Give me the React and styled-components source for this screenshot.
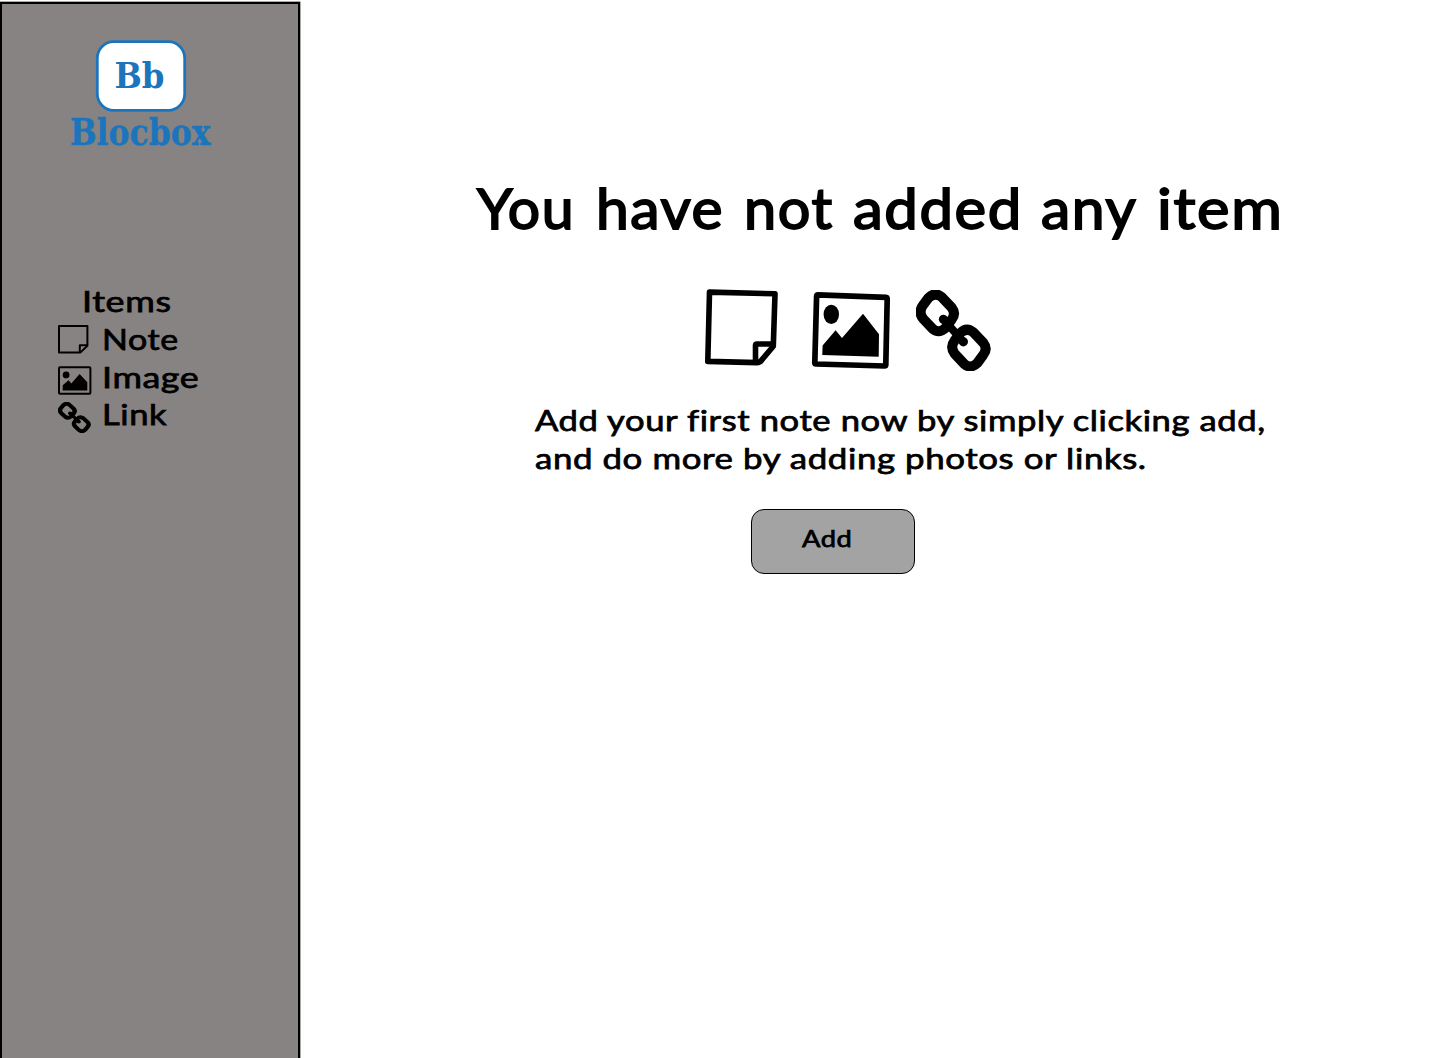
import React from "react";
import styled, { createGlobalStyle } from "styled-components";

const GlobalStyle = createGlobalStyle`
  * { box-sizing: border-box; }
  body { margin: 0; background: #fff; color: #000; font-family: Lato, "Open Sans", sans-serif; }
`;

const Page = styled.div`
  display: flex;
  height: 1058px;
  overflow: hidden;
`;

const Sidebar = styled.aside`
  width: 300px;
  height: 1070px;
  flex: none;
  margin-top: 2px;
  background: #888383;
  border: 2px solid #000;
  box-shadow: 0 0 0 0.5px #555;
`;

const LogoBox = styled.div`
  margin: 34px 0 0 66px;
  width: 146px;
  height: 116px;

  svg { display: block; overflow: visible; }
`;

const Nav = styled.nav`
  margin: 128px 0 0 56px;
`;

const NavTitle = styled.h2`
  margin: 0 0 0 24px;
  height: 38px;
  font-size: 29px;
  line-height: 38px;
  font-weight: 400;
`;

const NavItem = styled.div`
  display: flex;
  height: ${(p) => p.$height}px;
  line-height: 38px;
  font-size: 29px;
`;

const NavIcon = styled.span`
  flex: none;
  width: 43.5px;
  padding-top: ${(p) => p.$top}px;
  line-height: 0;
`;

const Label = styled.span`
  display: inline-block;
  white-space: nowrap;
  transform: scaleX(${(p) => p.$stretch || 1});
  transform-origin: 0 50%;
  letter-spacing: ${(p) => p.$spacing || 0}px;
  -webkit-text-stroke: ${(p) => p.$weight || 0.75}px currentColor;
`;

const Main = styled.main`
  flex: 1;
  display: flex;
  flex-direction: column;
`;

const Title = styled.h1`
  display: grid;
  grid-template-columns: 119px 148px 108.5px 188.5px 115.5px 130px;
  margin: 170px 0 0 177px;
  font-size: 56.5px;
  line-height: 74px;
  font-weight: 400;
`;

const IconRow = styled.div`
  display: flex;
  align-items: flex-start;
  margin: 44px 0 0 404px;
  height: 84px;
`;

const IconSlot = styled.span`
  line-height: 0;
  margin: ${(p) => p.$top}px ${(p) => p.$right}px 0 0;
`;

const Copy = styled.p`
  margin: 29px 0 0 235px;
  font-size: 29px;
  line-height: 38px;
`;

const AddButton = styled.button`
  margin: 32px 0 0 451px;
  width: 164px;
  height: 65px;
  padding: 0 0 8px 50px;
  text-align: left;
  font: 23.5px Lato, sans-serif;
  color: #000;
  background: #a3a3a3;
  border: 1.3px solid #000;
  border-radius: 13px;
`;

function Logo() {
  return (
    <svg width="146" height="116" viewBox="68 38 146 116" fontFamily="'DejaVu Serif Condensed','DejaVu Serif',serif" fontWeight="700" fill="#1c75bc">
      <rect x="97.3" y="41.7" width="87.4" height="68.6" rx="16.5" fill="#fff" stroke="#1c75bc" strokeWidth="2.8" />
      <text x="114.5" y="88" fontSize="36" textLength="50" lengthAdjust="spacingAndGlyphs">Bb</text>
      <text x="70" y="145.3" fontSize="37.5" textLength="140.5" lengthAdjust="spacingAndGlyphs" stroke="#1c75bc" strokeWidth="0.4">Blocbox</text>
    </svg>
  );
}

const ring = "M85 68Q105 48 126 66L155 97Q169 115 155 133L137 158Q117 178 97 160L69 130Q54 110 69 90Z";

function LinkIcon({ width, height }) {
  return (
    <svg width={width} height={height} viewBox="48 44 225 244" preserveAspectRatio="none" fill="none" stroke="#000">
      <path d={ring} strokeWidth="30" />
      <path d={ring} strokeWidth="30" transform="translate(95 106)" />
      <path d="M130 132L190 200" strokeWidth="24" />
      <circle cx="130" cy="132" r="13.5" fill="#000" stroke="none" />
      <circle cx="190" cy="200" r="14" fill="#000" stroke="none" />
    </svg>
  );
}

function NoteIcon() {
  return (
    <svg width="76" height="80" viewBox="704 288 76 80" fill="none" stroke="#000" strokeWidth="5.6" strokeLinejoin="round">
      <path d="M709.5 292.1L775 293.8L773.3 346.2L762 359.6Q760 362.6 757 362.6L707.8 361.4Z" />
      <path d="M773 344H757Q755.5 344 755.5 345.5V362" />
    </svg>
  );
}

function ImageIcon() {
  return (
    <svg width="82" height="82" viewBox="810 290 82 82" fill="#000">
      <path d="M818 294.9L886 297.3Q887.2 297.4 887.2 299L885.8 365Q885.7 366 884.5 366L816 364Q814.8 364 814.8 362.8L816.6 296.2Q816.7 294.9 818 294.9Z" fill="none" stroke="#000" strokeWidth="5.7" strokeLinejoin="round" />
      <ellipse cx="831.3" cy="314.4" rx="7.7" ry="9.6" />
      <path d="M822.6 345.5L835.6 330.3L842 338L863 313.7L879 334.3L878.7 356.7L822.3 355Z" />
    </svg>
  );
}

function SmallNoteIcon() {
  return (
    <svg width="31" height="29" viewBox="58 325 31 29" fill="none" stroke="#000" strokeWidth="2" strokeLinejoin="round">
      <path d="M59 326H87.4V345.7L80.5 352.4H59Z" />
      <path d="M87 345.2H79.8V352" />
    </svg>
  );
}

function SmallImageIcon() {
  return (
    <svg width="34" height="29" viewBox="58 365.5 34 29" fill="#000">
      <rect x="59" y="366.7" width="31.4" height="26.5" rx="1" fill="none" stroke="#000" strokeWidth="2" />
      <circle cx="66.1" cy="374.4" r="3.4" />
      <path d="M62.7 384.8L68.6 379.8L71.3 383L79.6 373.6L87.3 381.7V390H62.7Z" />
    </svg>
  );
}

const titleWords = [
  { text: "You", stretch: 1.01 },
  { text: "have", stretch: 1.04 },
  { text: "not", stretch: 1.02 },
  { text: "added", stretch: 1.06 },
  { text: "any", stretch: 1.04 },
  { text: "item", stretch: 1.09 },
];

export default function App() {
  return (
    <Page>
      <GlobalStyle />
      <Sidebar>
        <LogoBox><Logo /></LogoBox>
        <Nav>
          <NavTitle><Label $stretch={1.24} $spacing={0.5}>Items</Label></NavTitle>
          <NavItem $height={38}>
            <NavIcon $top={5}><SmallNoteIcon /></NavIcon>
            <Label $stretch={1.17} $spacing={0.5}>Note</Label>
          </NavItem>
          <NavItem $height={37}>
            <NavIcon $top={8}><SmallImageIcon /></NavIcon>
            <Label $stretch={1.235} $spacing={0.5}>Image</Label>
          </NavItem>
          <NavItem $height={38}>
            <NavIcon $top={7}><LinkIcon width={33} height={31} /></NavIcon>
            <Label $stretch={1.19} $spacing={0.5}>Link</Label>
          </NavItem>
        </Nav>
      </Sidebar>
      <Main>
        <Title>
          {titleWords.map(({ text, stretch }) => (
            <Label key={text} $spacing={1.5} $weight={1.8} $stretch={stretch}>{text}</Label>
          ))}
        </Title>
        <IconRow>
          <IconSlot $top={0} $right={30}><NoteIcon /></IconSlot>
          <IconSlot $top={2} $right={24}><ImageIcon /></IconSlot>
          <IconSlot $top={2} $right={0}><LinkIcon width={75} height={81} /></IconSlot>
        </IconRow>
        <Copy>
          <Label $stretch={1.192} $spacing={0.5}>Add your first note now by simply clicking add,</Label>
          <br />
          <Label $stretch={1.2} $spacing={0.5}>and do more by adding photos or links.</Label>
        </Copy>
        <AddButton><Label $stretch={1.16} $spacing={0.5}>Add</Label></AddButton>
      </Main>
    </Page>
  );
}
